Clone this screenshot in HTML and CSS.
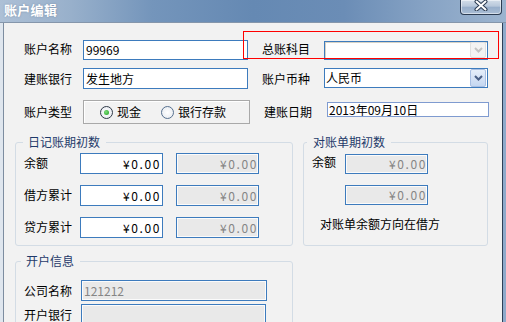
FILE: index.html
```html
<!DOCTYPE html>
<html lang="zh-CN">
<head>
<meta charset="utf-8">
<title>账户编辑</title>
<link rel="stylesheet" href="styles.css">
</head>
<body>
<div class="window">
  <header class="titlebar">
    <span class="title">账户编辑</span>
    <button class="close" type="button" aria-label="关闭">
      <svg width="14" height="11" viewBox="0 0 14 11">
        <path d="M2.5 1.5 L11.5 9.5 M11.5 1.5 L2.5 9.5" stroke="#2a3a50" stroke-width="4" stroke-linecap="round"/>
        <path d="M2.5 1.5 L11.5 9.5 M11.5 1.5 L2.5 9.5" stroke="#ffffff" stroke-width="2" stroke-linecap="round"/>
      </svg>
    </button>
  </header>
  <main class="client">
    <div class="form">
      <div class="row row1">
        <span class="lbl">账户名称</span>
        <div class="input w-left"><span class="val">99969</span></div>
        <span class="lbl lbl-r">总账科目</span>
        <div class="combo combo-off">
          <span class="val"></span>
          <span class="drop"><svg width="9" height="6" viewBox="0 0 9 6"><path d="M1 1 L4.5 4.5 L8 1" fill="none" stroke="#c4c4c4" stroke-width="2"/></svg></span>
        </div>
      </div>
      <div class="row row2">
        <span class="lbl">建账银行</span>
        <div class="input w-left"><span class="val">发生地方</span></div>
        <span class="lbl lbl-r">账户币种</span>
        <div class="combo combo-on">
          <span class="val">人民币</span>
          <span class="drop"><svg width="9" height="6" viewBox="0 0 9 6"><path d="M1 1 L4.5 4.5 L8 1" fill="none" stroke="#4a5f86" stroke-width="2"/></svg></span>
        </div>
      </div>
      <div class="row row3">
        <span class="lbl">账户类型</span>
        <div class="radios">
          <span class="radio checked"></span><span class="rtext">现金</span>
          <span class="radio second"></span><span class="rtext">银行存款</span>
        </div>
        <span class="lbl lbl-r">建账日期</span>
        <div class="date"><span class="val">2013年09月10日</span></div>
      </div>
    </div>

    <div class="groups">
      <fieldset class="group g-journal">
        <legend>日记账期初数</legend>
        <div class="grow">
          <span class="glbl">余额</span>
          <div class="amount"><span>¥0.00</span></div>
          <div class="amount off"><span>¥0.00</span></div>
        </div>
        <div class="grow">
          <span class="glbl">借方累计</span>
          <div class="amount"><span>¥0.00</span></div>
          <div class="amount off"><span>¥0.00</span></div>
        </div>
        <div class="grow">
          <span class="glbl">贷方累计</span>
          <div class="amount"><span>¥0.00</span></div>
          <div class="amount off"><span>¥0.00</span></div>
        </div>
      </fieldset>
      <fieldset class="group g-statement">
        <legend>对账单期初数</legend>
        <div class="srow">
          <span class="slbl">余额</span>
          <div class="amount off"><span>¥0.00</span></div>
        </div>
        <div class="srow">
          <span class="slbl"></span>
          <div class="amount off"><span>¥0.00</span></div>
        </div>
        <p class="note">对账单余额方向在借方</p>
      </fieldset>
    </div>

    <fieldset class="group g-bank">
      <legend>开户信息</legend>
      <div class="brow">
        <span class="blbl">公司名称</span>
        <div class="input off w-bank"><span class="val">121212</span></div>
      </div>
      <div class="brow brow2">
        <span class="blbl">开户银行</span>
        <div class="input off w-bank2"><span class="val"></span></div>
      </div>
    </fieldset>
  </main>
  <div class="highlight"></div>
</div>
</body>
</html>
```

FILE: styles.css
```css
* { box-sizing: border-box; }
html, body { margin: 0; padding: 0; }
body {
  width: 506px;
  height: 322px;
  overflow: hidden;
  background: #f2f2f2;
  font-family: "Noto Sans CJK SC", "Noto Sans CJK TC", sans-serif;
  font-size: 12px;
  line-height: 14px;
  color: #000;
}

.window {
  position: relative;
  width: 506px;
  height: 322px;
  overflow: hidden;
  display: flex;
  flex-direction: column;
  background: #f2f2f2;
}

/* ---------- title bar ---------- */
.titlebar {
  flex: none;
  height: 23px;
  display: flex;
  align-items: flex-start;
  background: linear-gradient(90deg, #adc0d6 0%, #98b0cb 14%, #7495bb 30%, #6589b3 50%, #6b8db6 68%, #88a4c5 85%, #9cb4cf 100%);
  border-bottom: 1px solid #8596ab;
}
.title {
  margin: 3px 0 0 4px;
  color: #fff;
  font-weight: bold;
  font-size: 13px;
  line-height: 14px;
  letter-spacing: 0.3px;
  text-shadow: 0 0 2px rgba(40, 60, 90, 0.35);
}
.close {
  margin-left: auto;
  margin-right: 4px;
  width: 42px;
  height: 15px;
  padding: 0;
  border: 1px solid #2c3c52;
  border-top: none;
  border-radius: 0 0 4px 4px;
  background: linear-gradient(#d3dde9 0%, #b7c7da 45%, #97aeca 50%, #a9bdd5 100%);
  box-shadow: inset 0 0 0 1px rgba(255, 255, 255, 0.5);
  display: flex;
  align-items: flex-start;
  justify-content: center;
}
.close svg { display: block; margin-top: 0; }

/* ---------- client ---------- */
.client {
  flex: 1;
  border-left: 3px solid #dfe6ee;
  border-right: 3px solid #8eaacb;
  box-shadow: inset 1px 0 0 #7d8da0, inset -1px 0 0 #2d3f57;
  padding: 17px 0 0 12px;
  display: flex;
  flex-direction: column;
  align-items: flex-start;
}

.form { margin-left: 9px; }
.row { display: flex; align-items: center; }
.row1 { height: 20px; }
.row2 { height: 21px; margin-top: 8px; }
.row3 { height: 24px; margin-top: 11px; }

.lbl { width: 59px; flex: none; }
.row1 .lbl { margin-top: -3px; }
.lbl-r { width: 62px; margin-left: 14px; }

.val { white-space: nowrap; }

.input {
  flex: none;
  height: 20px;
  border: 1px solid #3d7bbd;
  background: #fff;
  padding: 0 2px;
  display: flex;
  align-items: center;
}
.row2 .input { height: 21px; }
.w-left { width: 165px; }
.input.off {
  background: #e9e9e9;
  box-shadow: inset 0 0 0 1px #fbfbfb;
  color: #858585;
}

.combo {
  flex: none;
  width: 164px;
  display: flex;
  align-items: center;
  justify-content: space-between;
  border: 1px solid #3d7bbd;
  background: #fff;
  padding: 0 1px 0 1px;
}
.combo-off {
  height: 19px;
  box-shadow: inset 1px 1px 0 #d8d2c4;
}
.combo-on { height: 20px; margin-top: -1px; }
.drop {
  width: 16px;
  display: flex;
  align-items: center;
  justify-content: center;
}
.combo-off .drop {
  height: 16px;
  background: #f3f3f3;
  border: 1px solid #e0e0e0;
  border-radius: 2px;
}
.combo-on .drop {
  height: 18px;
  background: linear-gradient(#e6eefa, #c5d7f1);
  border: 1px solid #a9bfe3;
  border-radius: 2px;
}

.radios {
  flex: none;
  width: 167px;
  height: 24px;
  border: 1px solid #a9a9a9;
  box-shadow: inset 1px 1px 0 #fff;
  display: flex;
  align-items: center;
  padding-left: 16px;
}
.radio {
  width: 13px;
  height: 13px;
  border-radius: 50%;
  border: 1px solid #56708f;
  background: radial-gradient(circle, #ffffff 0%, #e4e8ee 100%);
  flex: none;
  display: flex;
  align-items: center;
  justify-content: center;
}
.radio.checked { border-color: #2f3a48; }
.radio.checked::after {
  content: "";
  width: 5px;
  height: 5px;
  border-radius: 50%;
  background: radial-gradient(circle at 40% 40%, #7ee07a, #1c9c1f);
}
.rtext { margin-left: 4px; }
.radio.second { margin-left: 20px; }

.date {
  flex: none;
  width: 162px;
  height: 15px;
  margin-left: 1px;
  margin-bottom: 5px;
  border: 1px solid #7f9bd0;
  background: #fff;
  padding: 0 1px;
  display: flex;
  align-items: center;
}

/* ---------- group boxes ---------- */
.groups {
  display: flex;
  gap: 10px;
  margin-top: 11px;
}
.group {
  margin: 0;
  min-width: 0;
  border: 1px solid #d3dce5;
  border-radius: 3px;
  padding: 4px 8px 7px 8px;
}
.group legend {
  color: #1f3a6a;
  line-height: 14px;
  padding: 0 6px 0 5px;
  margin-left: -1px;
}
.g-journal { width: 278px; }
.g-statement { width: 185px; padding-top: 5px; }
.g-statement legend { margin-left: -5px; padding-left: 6px; }

.grow { display: flex; align-items: center; height: 21px; }
.grow + .grow { margin-top: 11px; }
.glbl { width: 56px; flex: none; margin-top: -2px; }

.amount {
  flex: none;
  width: 83px;
  height: 21px;
  border: 1px solid #3d7bbd;
  background: #fff;
  display: flex;
  align-items: center;
  justify-content: flex-end;
  padding-right: 1px;
  letter-spacing: 1.6px;
}
.amount.off {
  margin-left: 13px;
  background: #e9e9e9;
  box-shadow: inset 0 0 0 1px #fbfbfb;
  color: #858585;
  padding-right: 0;
}

.srow { display: flex; align-items: center; height: 20px; }
.srow + .srow { margin-top: 11px; }
.slbl { width: 33px; flex: none; margin-top: -4px; }
.srow .amount.off { margin-left: 0; height: 20px; }
.note { margin: 12px 0 0 8px; }

.g-bank {
  width: 278px;
  margin-top: 8px;
  padding-top: 12px;
  padding-bottom: 10px;
}
.g-bank legend { margin-left: -3px; padding-left: 5px; }
.brow { display: flex; align-items: center; height: 21px; }
.brow2 { margin-top: 3px; }
.blbl { width: 57px; flex: none; }
.w-bank { width: 186px; height: 21px; }
.w-bank2 { width: 185px; height: 21px; }

/* annotation overlay */
.highlight {
  position: absolute;
  left: 243px;
  top: 31px;
  width: 256px;
  height: 28px;
  border: 1px solid #ff0000;
  pointer-events: none;
}
```
